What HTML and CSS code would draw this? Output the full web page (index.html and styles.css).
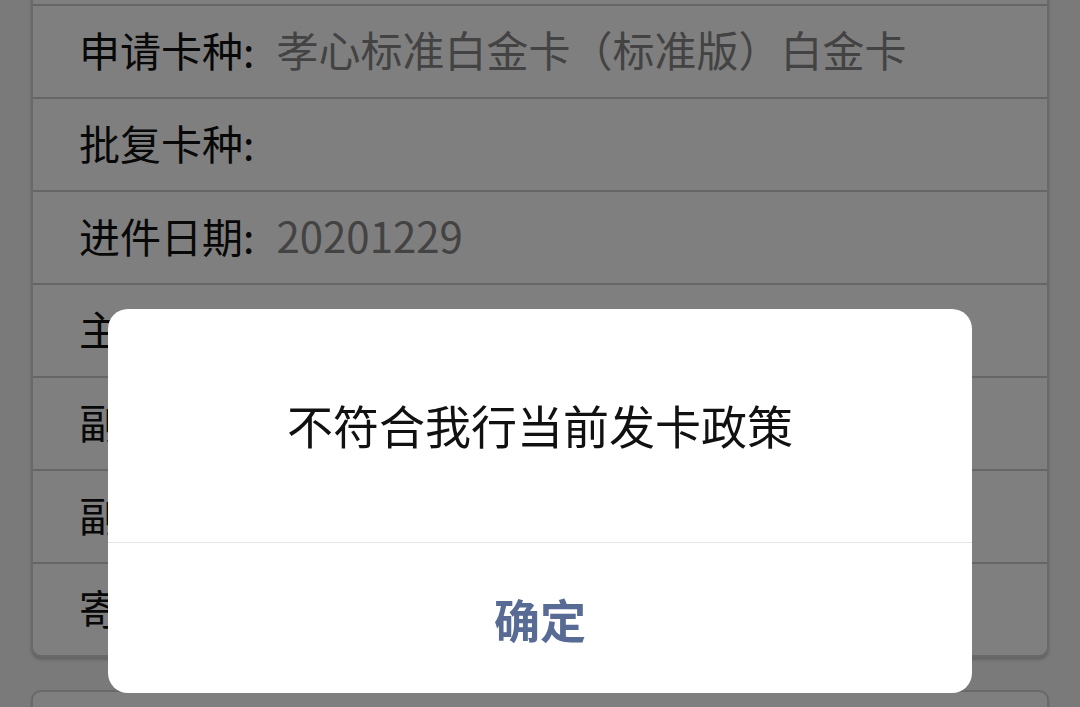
FILE: index.html
```html
<!DOCTYPE html>
<html lang="zh-CN">
<head>
  <meta charset="UTF-8">
  <meta name="viewport" content="width=device-width, initial-scale=1.0">
  <title>申请进度</title>
  <link rel="stylesheet" href="styles.css">
</head>
<body>
  <div class="page">
    <div class="card">
      <div class="row"></div>
      <div class="row"><span class="label">申请卡种:</span><span class="value">孝心标准白金卡（标准版）白金卡</span></div>
      <div class="row"><span class="label">批复卡种:</span><span class="value"></span></div>
      <div class="row"><span class="label">进件日期:</span><span class="value">20201229</span></div>
      <div class="row"><span class="label">主卡状态:</span><span class="value"></span></div>
      <div class="row"><span class="label">副卡状态:</span><span class="value"></span></div>
      <div class="row"><span class="label">副卡卡种:</span><span class="value"></span></div>
      <div class="row"><span class="label">寄送地址:</span><span class="value"></span></div>
    </div>
    <div class="card">
      <div class="row"></div>
    </div>
  </div>

  <div class="mask">
    <div class="dialog">
      <div class="dialog-body">不符合我行当前发卡政策</div>
      <div class="dialog-footer">
        <button class="dialog-btn" onclick="closeDialog()">确定</button>
      </div>
    </div>
  </div>

  <script>
    function closeDialog() {
      document.querySelector('.mask').style.display = 'none';
    }
  </script>
</body>
</html>
```

FILE: styles.css
```css
* {
  box-sizing: border-box;
}
body {
  margin: 0;
  background: #f4f4f4;
  font-family: "Noto Sans CJK SC", "Noto Sans", sans-serif;
  overflow: hidden;
}
.page {
  margin-top: -89px;
}
.card {
  margin: 0 31px 33px;
  background: #fff;
  border: 2px solid #d2d2d2;
  border-radius: 10px;
  box-shadow: 0 3px 3px rgba(0, 0, 0, 0.18);
}
.row {
  display: flex;
  align-items: center;
  height: 93px;
  padding-left: 46px;
  padding-bottom: 6px;
  border-top: 2px solid #cccccc;
  font-size: 41px;
}
.row:first-child {
  border-top: none;
  height: 91px;
}
.label {
  color: #111;
  margin-right: 22px;
}
.value {
  color: #868686;
  font-size: 42px;
}
.mask {
  position: fixed;
  inset: 0;
  background: rgba(0, 0, 0, 0.5);
  display: flex;
  justify-content: center;
  align-items: flex-start;
  padding-top: 309px;
}
.dialog {
  width: 864px;
  background: #fff;
  border-radius: 20px;
  overflow: hidden;
}
.dialog-body {
  height: 234px;
  padding-bottom: 4px;
  display: flex;
  align-items: center;
  justify-content: center;
  font-size: 46px;
  color: #111;
  border-bottom: 1px solid #e5e5e5;
}
.dialog-footer {
  height: 150px;
  display: flex;
}
.dialog-btn {
  flex: 1;
  border: none;
  background: none;
  font-family: inherit;
  font-size: 46px;
  font-weight: bold;
  color: #576b95;
  cursor: pointer;
}
```
